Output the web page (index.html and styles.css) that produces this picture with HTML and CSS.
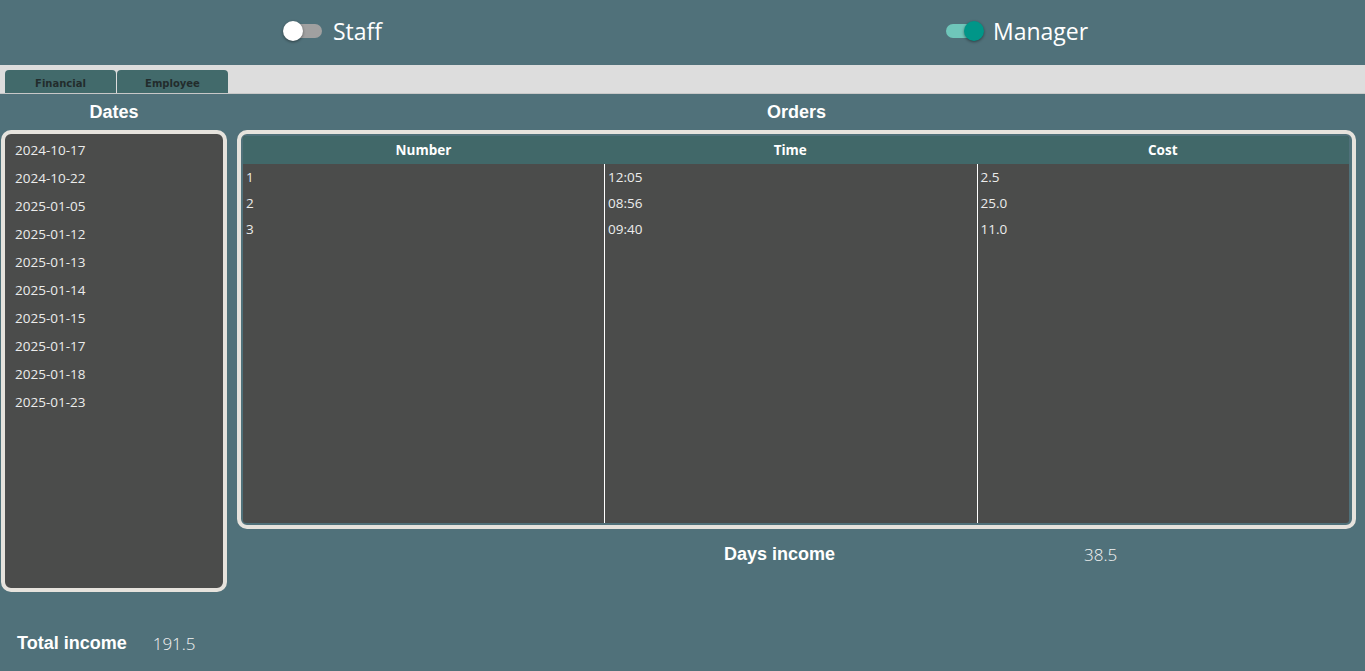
FILE: index.html
```html
<!DOCTYPE html>
<html lang="en">
<head>
<meta charset="utf-8">
<title>Income</title>
<link rel="stylesheet" href="styles.css">
</head>
<body>
<header class="topbar">
  <label class="toggle toggle-staff">
    <span class="track"><span class="knob"></span></span>
    <span class="toggle-label">Staff</span>
  </label>
  <label class="toggle toggle-manager">
    <span class="track on"><span class="knob"></span></span>
    <span class="toggle-label">Manager</span>
  </label>
</header>

<nav class="tabs">
  <div class="tab">Financial</div>
  <div class="tab">Employee</div>
</nav>

<main class="content">
  <section class="left">
    <h2 class="title">Dates</h2>
    <div class="box dates">
      <div class="date">2024-10-17</div>
      <div class="date">2024-10-22</div>
      <div class="date">2025-01-05</div>
      <div class="date">2025-01-12</div>
      <div class="date">2025-01-13</div>
      <div class="date">2025-01-14</div>
      <div class="date">2025-01-15</div>
      <div class="date">2025-01-17</div>
      <div class="date">2025-01-18</div>
      <div class="date">2025-01-23</div>
    </div>
    <div class="total">
      <span class="sum-label">Total income</span>
      <span class="sum-value">191.5</span>
    </div>
  </section>

  <section class="right">
    <h2 class="title">Orders</h2>
    <div class="box orders">
      <div class="table">
        <div class="th">Number</div>
        <div class="th">Time</div>
        <div class="th">Cost</div>
        <div class="col">
          <div class="cell">1</div>
          <div class="cell">2</div>
          <div class="cell">3</div>
        </div>
        <div class="col divided">
          <div class="cell">12:05</div>
          <div class="cell">08:56</div>
          <div class="cell">09:40</div>
        </div>
        <div class="col divided">
          <div class="cell">2.5</div>
          <div class="cell">25.0</div>
          <div class="cell">11.0</div>
        </div>
      </div>
    </div>
    <div class="days">
      <span class="sum-label">Days income</span>
      <span class="sum-value">38.5</span>
    </div>
  </section>
</main>
</body>
</html>
```

FILE: styles.css
```css
html, body {
  margin: 0;
  padding: 0;
}

body {
  width: 1365px;
  height: 671px;
  overflow: hidden;
  background: #50717a;
  color: #ffffff;
  font-family: "Open Sans", "Noto Sans", sans-serif;
}

/* top bar */
.topbar {
  height: 65px;
  display: flex;
  align-items: center;
  padding-left: 283px;
  box-sizing: border-box;
  padding-bottom: 3px;
}

.toggle {
  display: flex;
  align-items: center;
}

.toggle-staff {
  width: 661px;
}

.track {
  position: relative;
  display: block;
  width: 37px;
  height: 14px;
  margin-left: 2px;
  border-radius: 7px;
  background: #a0a0a0;
}

.track.on {
  background: #6fc6ba;
}

.knob {
  position: absolute;
  top: -3px;
  left: -2px;
  width: 20px;
  height: 20px;
  border-radius: 50%;
  background: #ffffff;
  box-shadow: 0 1px 3px rgba(0, 0, 0, 0.45);
}

.track.on .knob {
  left: 18px;
  background: #009688;
}

.toggle-label {
  margin-left: 11px;
  font-size: 23px;
  line-height: 30px;
  color: #ffffff;
}

.toggle-manager .toggle-label {
  margin-left: 10px;
}

/* tabs */
.tabs {
  height: 29px;
  background: #dddddd;
  display: flex;
  align-items: flex-end;
  gap: 1px;
  padding-left: 5px;
  box-sizing: border-box;
  border-bottom: 1px solid #c8c8c8;
}

.tab {
  width: 111px;
  height: 23px;
  background: #426a6b;
  border-radius: 4px 4px 0 0;
  color: #222c2c;
  font-family: "DejaVu Sans", sans-serif;
  font-weight: bold;
  font-size: 10px;
  line-height: 27px;
  text-align: center;
}

/* content */
.content {
  display: grid;
  grid-template-columns: 226px 1fr;
  column-gap: 10px;
  padding: 0 9px 0 1px;
}

.title {
  margin: 0;
  height: 36px;
  line-height: 36px;
  text-align: center;
  font-family: "Liberation Sans", Arial, sans-serif;
  font-weight: bold;
  font-size: 18px;
  color: #ffffff;
}

.box {
  border: 4px solid #e6e3dd;
  border-radius: 10px;
  box-sizing: border-box;
}

.dates {
  height: 462px;
  background: #4b4c4b;
  padding: 2px 0 0 10px;
}

.date {
  height: 28px;
  line-height: 28px;
  font-size: 13.5px;
  color: #ececec;
}

.total {
  display: flex;
  align-items: center;
  height: 40px;
  margin-top: 31px;
  padding-left: 16px;
}

.total .sum-value {
  margin-left: 26px;
}

.sum-label {
  font-family: "Liberation Sans", Arial, sans-serif;
  font-weight: bold;
  font-size: 18px;
  color: #ffffff;
}

.sum-value {
  font-size: 17px;
  font-weight: 300;
  color: #f4f4f4;
}

/* orders table */
.orders {
  height: 399px;
  padding: 2px 3px 2px 2px;
}

.table {
  height: 100%;
  display: grid;
  grid-template-columns: 361px 1fr 1fr;
  grid-template-rows: 28px 1fr;
  background: #4b4c4b;
  border-radius: 3px;
  overflow: hidden;
}

.th {
  background: #416869;
  font-weight: bold;
  font-size: 13.5px;
  line-height: 28px;
  text-align: center;
  color: #ffffff;
}

.col {
  padding-left: 3px;
}

.col.divided {
  border-left: 1px solid #ffffff;
}

.cell {
  height: 26px;
  line-height: 26px;
  font-size: 13.5px;
  color: #ececec;
}

.days {
  display: flex;
  align-items: center;
  height: 50px;
  padding-left: 487px;
}

.days .sum-value {
  margin-left: 249px;
}
```
